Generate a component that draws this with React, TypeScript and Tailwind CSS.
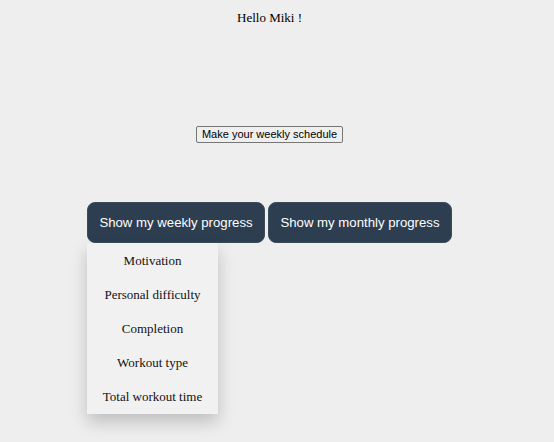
import { useState } from 'react';

const progressItems = ['Motivation', 'Personal difficulty', 'Completion', 'Workout type', 'Total workout time'];

export default function App() {
  const [open, setOpen] = useState(true);

  return (
    <div className="min-h-[442px] w-full bg-[#eeeeee]">
      <div className="flex w-[539px] flex-col items-center text-center font-['Liberation_Serif',serif] text-[13px] text-black">
        <p className="mt-[10px] leading-[16px]">Hello Miki !</p>

        <button className="mt-[100px] h-[17px] w-[147px] whitespace-nowrap rounded-[2px] border border-[#767676] bg-[#efefef] p-0 font-['Liberation_Sans',sans-serif] text-[11px] leading-[15px] text-black">
          Make your weekly schedule
        </button>

        <div className="mt-[59px] flex gap-[3px] font-['Liberation_Sans',sans-serif]">
          <div className="relative">
            <button
              onClick={() => setOpen((v) => !v)}
              className="h-[41px] w-[178px] whitespace-nowrap rounded-[8px] border border-[#3b4b5c] bg-[#2c3e50] text-[13.2px] text-white"
            >
              Show my weekly progress
            </button>
            {open ? (
              <div className="absolute left-0 top-[41px] z-10 w-[131px] bg-[#f1f1f1] pt-[1px] font-['Liberation_Serif',serif] shadow-[0_8px_16px_0_rgba(0,0,0,0.2)]">
                {progressItems.map((item) => (
                  <div key={item} className="whitespace-nowrap py-[9px] text-[13px] leading-[16px] text-[#111]">
                    {item}
                  </div>
                ))}
              </div>
            ) : null}
          </div>
          <button className="h-[41px] w-[184px] whitespace-nowrap rounded-[8px] border border-[#3b4b5c] bg-[#2c3e50] text-[13.2px] text-white">
            Show my monthly progress
          </button>
        </div>
      </div>
    </div>
  );
}
